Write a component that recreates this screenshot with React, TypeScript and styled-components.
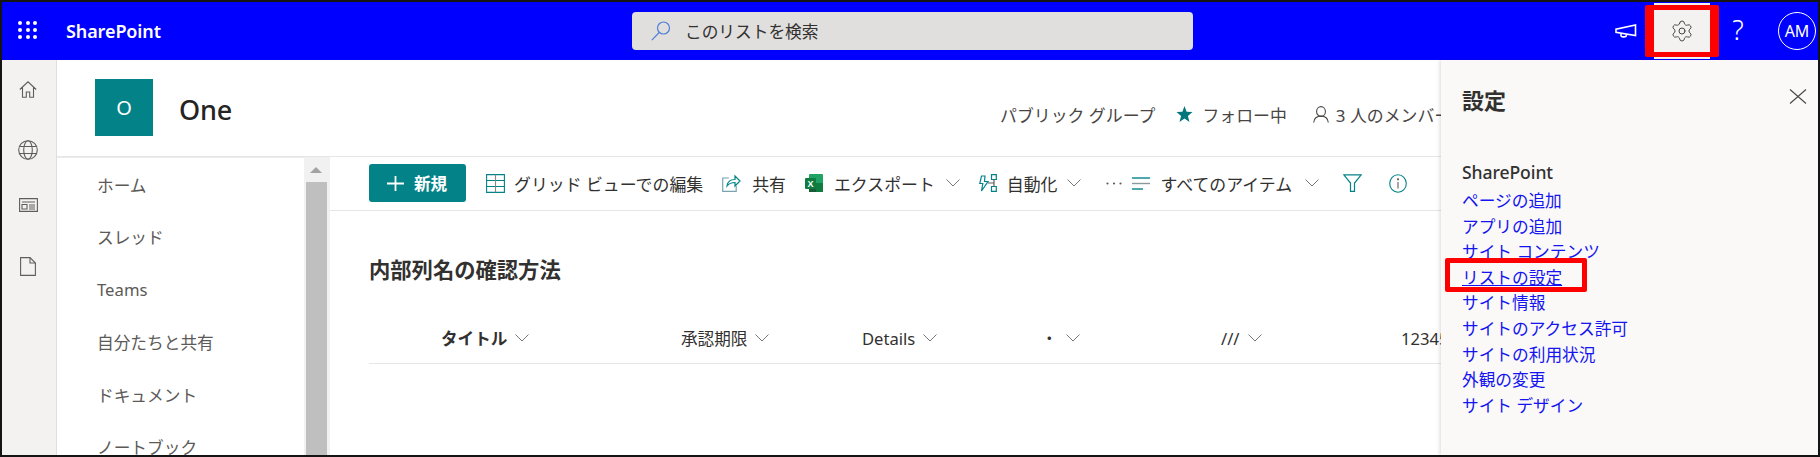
import { Settings } from "lucide-react";
import styled, { createGlobalStyle } from "styled-components";

const GlobalStyle = createGlobalStyle`
  html, body {
    margin: 0;
    padding: 0;
    background: #fff;
    font-family: "Noto Sans", "Noto Sans CJK JP", sans-serif;
  }
  * { box-sizing: border-box; }
`;

const Frame = styled.div`
  width: 1820px;
  height: 457px;
  border: 2px solid #141414;
  display: flex;
  flex-direction: column;
  overflow: hidden;
  color: #323130;
`;

const TopBar = styled.header`
  height: 58px;
  flex: none;
  background: #0000ff;
  display: flex;
  align-items: center;
  color: #fff;
`;

const Waffle = styled.div`
  width: 19px;
  height: 18px;
  margin-left: 16px;
  display: grid;
  grid-template-columns: repeat(3, 4px);
  grid-template-rows: repeat(3, 4px);
  justify-content: space-between;
  align-content: space-between;
  margin-top: -2px;
  span {
    background: #fff;
    border-radius: 50%;
  }
`;

const Brand = styled.div`
  margin-left: 29px;
  width: 566px;
  font-size: 18px;
  font-weight: 600;
  letter-spacing: -0.1px;
`;

const SearchBox = styled.div`
  width: 561px;
  height: 38px;
  background: #e0dfdd;
  border-radius: 4px;
  display: flex;
  align-items: center;
  padding-left: 19px;
  gap: 14px;
  color: #323130;
  font-size: 16.7px;
`;

const TopActions = styled.div`
  margin-left: auto;
  display: flex;
  align-items: center;
  height: 100%;
`;

const TopButton = styled.div<{ $active?: boolean }>`
  position: relative;
  width: 56px;
  height: 56px;
  display: flex;
  align-items: center;
  justify-content: center;
  background: ${(p) => (p.$active ? "#f3f2f1" : "transparent")};
  color: ${(p) => (p.$active ? "#484644" : "#fff")};
  font-size: 27px;
  font-weight: 300;
`;

const HelpMark = styled.span`
  margin-top: -4px;
`;

const Callout = styled.div<{ $v: number; $h: number }>`
  position: absolute;
  border-style: solid;
  border-color: #ff0000;
  border-width: ${(p) => p.$v}px ${(p) => p.$h}px;
  border-radius: 2px;
  pointer-events: none;
`;

const GearCallout = styled(Callout)`
  inset: 2px -9px;
`;

const LinkCallout = styled(Callout)`
  left: -17px;
  top: -7px;
  width: 142px;
  height: 34px;
`;

const Avatar = styled.div`
  width: 38px;
  height: 38px;
  margin: 0 2px 0 12px;
  border: 1px solid #fff;
  border-radius: 50%;
  display: flex;
  align-items: center;
  justify-content: center;
  font-size: 16px;
`;

const Body = styled.div`
  flex: 1;
  min-height: 0;
  display: flex;
`;

const Rail = styled.aside`
  width: 55px;
  flex: none;
  background: #f3f2f1;
  border-right: 1px solid #e1dfdd;
  display: flex;
  flex-direction: column;
  align-items: center;
  color: #605e5c;
  padding-top: 21px;
  padding-right: 2px;
`;

const RailSlot = styled.div`
  height: 58.5px;
  display: flex;
  align-items: flex-start;
  justify-content: center;
`;

const Main = styled.main`
  flex: 1;
  min-width: 0;
  display: flex;
  flex-direction: column;
  overflow: hidden;
`;

const SiteHeader = styled.div`
  height: 97px;
  flex: none;
  border-bottom: 1px solid #e8e6e4;
  display: flex;
  align-items: center;
  padding-left: 38px;
`;

const SiteLogo = styled.div`
  width: 58px;
  height: 57px;
  flex: none;
  margin-top: -1px;
  background: #038387;
  color: #fff;
  display: flex;
  align-items: center;
  justify-content: center;
  font-size: 20px;
`;

const SiteTitle = styled.div`
  flex: 0 0 821px;
  margin-left: 26px;
  padding-top: 2px;
  font-size: 27px;
  font-weight: 500;
  letter-spacing: -0.2px;
  color: #252423;
`;

const SiteMeta = styled.div`
  flex: none;
  display: flex;
  align-items: center;
  margin-top: 12px;
  font-size: 16.9px;
  white-space: nowrap;
  color: #484644;
`;

const MetaItem = styled.span<{ $ml: number }>`
  margin-left: ${(p) => p.$ml}px;
  display: inline-flex;
  align-items: center;
`;

const Workspace = styled.div`
  flex: 1;
  min-height: 0;
  display: flex;
`;

const Nav = styled.nav`
  width: 247px;
  flex: none;
  padding: 0.5px 0 0 40px;
  overflow: hidden;
  border-top: 1px solid #ececec;
`;

const NavItem = styled.div`
  height: 52.5px;
  display: flex;
  align-items: center;
  font-size: 16.7px;
  color: #5c5a58;
  white-space: nowrap;
`;

const ScrollTrack = styled.div`
  width: 26px;
  flex: none;
  background: #f1f1f1;
  display: flex;
  flex-direction: column;
  align-items: flex-end;
  padding-right: 3px;
`;

const ScrollArrow = styled.div`
  width: 23px;
  height: 25px;
  display: flex;
  align-items: center;
  justify-content: center;
  &::before {
    content: "";
    border-left: 6px solid transparent;
    border-right: 6px solid transparent;
    border-bottom: 6px solid #a3a3a3;
  }
`;

const ScrollThumb = styled.div`
  width: 21px;
  flex: 1;
  background: #bfbfbf;
`;

const Content = styled.section`
  flex: 1;
  min-width: 0;
  display: flex;
  flex-direction: column;
`;

const CommandBar = styled.div`
  height: 54px;
  flex: none;
  border-bottom: 1px solid #e8e6e4;
  display: flex;
  align-items: center;
  padding: 0 0 1px 39px;
  white-space: nowrap;
`;

const NewButton = styled.div`
  width: 97px;
  height: 38px;
  flex: none;
  background: #038387;
  border-radius: 3px;
  color: #fff;
  display: flex;
  align-items: center;
  padding-left: 18px;
  gap: 10px;
  font-size: 16.6px;
  font-weight: 700;
`;

const ToolItem = styled.div<{ $ml: number; $gap?: number }>`
  flex: none;
  margin-left: ${(p) => p.$ml}px;
  display: flex;
  align-items: center;
  gap: ${(p) => p.$gap ?? 10}px;
  font-size: 16.9px;
  color: #323130;
`;

const ListBody = styled.div`
  padding-left: 39px;
`;

const ListTitle = styled.h2`
  margin: 44px 0 28px;
  font-size: 21.3px;
  line-height: 30px;
  font-weight: 700;
  color: #323130;
`;

const ColumnRow = styled.div`
  height: 51px;
  border-bottom: 1px solid #e8e6e4;
  display: flex;
  align-items: center;
  padding-left: 72px;
  white-space: nowrap;
`;

const Column = styled.div<{ $width: number; $bold?: boolean }>`
  flex: 0 0 ${(p) => p.$width}px;
  display: flex;
  align-items: center;
  gap: 8px;
  font-size: 16.6px;
  font-weight: ${(p) => (p.$bold ? 600 : 400)};
  color: #323130;
`;

const Panel = styled.aside`
  width: 377px;
  flex: none;
  background: #faf9f8;
  box-shadow: -2px 0 3px rgba(0, 0, 0, 0.1);
  padding: 25px 11px 0 21px;
  position: relative;
`;

const PanelHead = styled.div`
  display: flex;
  align-items: flex-start;
  justify-content: space-between;
`;

const PanelClose = styled.span`
  display: flex;
  margin-top: 4px;
`;

const PanelTitle = styled.h2`
  margin: 0;
  font-size: 22px;
  line-height: 30px;
  font-weight: 700;
  color: #323130;
`;

const PanelGroup = styled.div`
  margin-top: 45px;
  font-size: 17.6px;
  line-height: 24px;
  font-weight: 500;
  letter-spacing: -0.1px;
  color: #323130;
`;

const PanelLinks = styled.div`
  margin-top: 4px;
  display: flex;
  flex-direction: column;
`;

const PanelLink = styled.a<{ $current?: boolean }>`
  position: relative;
  align-self: flex-start;
  height: 25.6px;
  line-height: 25.6px;
  font-size: 16.7px;
  color: #1414f0;
  text-decoration: ${(p) => (p.$current ? "underline" : "none")};
  white-space: nowrap;
`;

const SearchIcon = () => (
  <svg width="20" height="20" viewBox="0 0 20 20" fill="none" stroke="#4f7fd6" strokeWidth="1.2">
    <circle cx="12.5" cy="7" r="6" />
    <path d="M8.2 11.5 0.8 19.2" />
  </svg>
);

const Megaphone = () => (
  <svg width="22" height="14" viewBox="0 0 22 14" fill="none" stroke="#fff" strokeWidth="1.6">
    <path d="M20.5 1v10.500L1 8.300V5.200z" />
    <path d="M6 9.500v2.200c0 1.200 3.600 1.700 5 .6l.6-1.800" />
  </svg>
);

const Chevron = () => (
  <svg width="14" height="8" viewBox="0 0 14 8" fill="none" stroke="#7a7876" strokeWidth="1">
    <path d="M.5.5 7 7l6.500-6.500" />
  </svg>
);

const HomeIcon = () => (
  <svg width="18" height="17" viewBox="0 0 18 17" fill="none" stroke="#605e5c" strokeWidth="1.1">
    <path d="M.8 8.500 9 .8l8.200 7.700M3.500 6.500v9.800h3.800v-5.300h3.400v5.300h3.800V6.500" />
  </svg>
);

const GlobeIcon = () => (
  <svg width="20" height="20" viewBox="0 0 20 20" fill="none" stroke="#605e5c" strokeWidth="1.1">
    <circle cx="10" cy="10" r="9.300" />
    <ellipse cx="10" cy="10" rx="4.300" ry="9.300" />
    <path d="M1.500 6.500h17M1.500 13.500h17" />
  </svg>
);

const NewsIcon = () => (
  <svg width="19" height="14" viewBox="0 0 19 14" fill="none" stroke="#605e5c" strokeWidth="1.1">
    <path d="M.6.6h17.800v12.800H.6z" />
    <path d="M3 4h13M3 6.500h5v4.500H3zM10 7h6M10 9h6M10 11h6" />
  </svg>
);

const DocIcon = () => (
  <svg width="16" height="19" viewBox="0 0 16 19" fill="none" stroke="#605e5c" strokeWidth="1.1">
    <path d="M.6.6h9.400l5.400 5.400v12.400H.6z" />
    <path d="M10 .6v5.400h5.400" />
  </svg>
);

const PlusIcon = () => (
  <svg width="17" height="15" viewBox="0 0 17 15" fill="none" stroke="#fff" strokeWidth="1.8">
    <path d="M8.500 0v15M0 7.500h17" />
  </svg>
);

const GridIcon = () => (
  <svg width="19" height="19" viewBox="0 0 19 19" fill="none" stroke="#038387" strokeWidth="1.1">
    <path d="M.6.6h17.800v17.800H.6z" />
    <path d="M.6 6.500h17.800M.6 12.500h17.800" />
    <path d="M9.500.6v17.800" stroke="#8a8886" />
  </svg>
);

const ShareIcon = () => (
  <svg width="19" height="18" viewBox="0 0 19 18" fill="none" strokeWidth="1.2">
    <path d="M7 4H.7v13.300h13.500V12" stroke="#7aa3ab" />
    <path d="M5 12c.5-4 3.500-6.500 8-6.500V2l5 5-5 5V8.500c-3.500 0-6 1-8 3.500z" stroke="#038387" />
  </svg>
);

const ExcelIcon = () => (
  <svg width="18" height="18" viewBox="0 0 18 18">
    <rect x="4" y="0" width="14" height="18" rx="1" fill="#21a366" />
    <rect x="11" y="9" width="7" height="9" fill="#107c41" />
    <rect x="4" y="9" width="7" height="9" fill="#185c37" />
    <rect x="0" y="4" width="11" height="11" rx="1" fill="#107c41" />
    <text x="5.500" y="12.700" textAnchor="middle" fontSize="9" fontWeight="700" fill="#fff" fontFamily="Liberation Sans, sans-serif">
      X
    </text>
  </svg>
);

const AutomateIcon = () => (
  <svg width="18" height="18" viewBox="0 0 18 18" fill="none" stroke="#038387" strokeWidth="1.2">
    <path d="M6 2H2.500L.8 9.500h3L2.500 17 9 7.500H5.500z" />
    <path d="M12.500.7h4.800v4.800h-4.800zM12.500 12.500h4.800v4.800h-4.800z" />
    <path d="M15 5.500v7M9 9h6" stroke="#605e5c" />
  </svg>
);

const DotsIcon = () => (
  <svg width="16" height="3" viewBox="0 0 16 3" fill="#605e5c">
    <circle cx="1.500" cy="1.500" r="1.100" />
    <circle cx="8" cy="1.500" r="1.100" />
    <circle cx="14.500" cy="1.500" r="1.100" />
  </svg>
);

const LinesIcon = () => (
  <svg width="18" height="13" viewBox="0 0 18 13" fill="none" strokeWidth="1.4">
    <path d="M0 1h18" stroke="#038387" />
    <path d="M0 6.500h18" stroke="#8a9a9a" />
    <path d="M0 12h11" stroke="#038387" />
  </svg>
);

const FunnelIcon = () => (
  <svg width="19" height="18" viewBox="0 0 19 18" fill="none" stroke="#038387" strokeWidth="1.2">
    <path d="M.8.8h17.400L11.500 9v8.300h-4V9z" />
  </svg>
);

const InfoIcon = () => (
  <svg width="18" height="19" viewBox="0 0 18 19" fill="none" stroke="#038387" strokeWidth="1.1">
    <ellipse cx="9" cy="9.500" rx="8.300" ry="8.800" />
    <path d="M9 8v6.500" stroke="#605e5c" />
    <circle cx="9" cy="5.300" r=".6" fill="#605e5c" stroke="#605e5c" />
  </svg>
);

const StarIcon = () => (
  <svg width="17" height="16" viewBox="0 0 17 16" fill="#03787c">
    <path d="M8.500 0l2.100 5.800 5.900.3-4.600 3.800 1.600 6.100-5-3.400-5 3.400 1.600-6.100L.5 6.100l5.900-.3z" />
  </svg>
);

const PersonIcon = () => (
  <svg width="16" height="17" viewBox="0 0 16 17" fill="none" stroke="#484644" strokeWidth="1.1">
    <ellipse cx="8" cy="5.500" rx="4.400" ry="4.900" />
    <path d="M.7 16.500c.4-4 3.300-6.400 7.300-6.400s6.900 2.400 7.300 6.400" />
  </svg>
);

const CloseIcon = () => (
  <svg width="18" height="15" viewBox="0 0 18 15" fill="none" stroke="#484644" strokeWidth="1.1">
    <path d="M1 .5 17 14.500M17 .5 1 14.500" />
  </svg>
);

const navItems = ["ホーム", "スレッド", "Teams", "自分たちと共有", "ドキュメント", "ノートブック"];

const links = [
  "ページの追加",
  "アプリの追加",
  "サイト コンテンツ",
  "リストの設定",
  "サイト情報",
  "サイトのアクセス許可",
  "サイトの利用状況",
  "外観の変更",
  "サイト デザイン",
];

const columns = [
  { label: "タイトル", width: 240, bold: true },
  { label: "承認期限", width: 181 },
  { label: "Details", width: 179 },
  { label: "・", width: 180 },
  { label: "///", width: 180 },
];

function App() {
  return (
    <Frame>
      <GlobalStyle />
      <TopBar>
        <Waffle>
          {Array.from({ length: 9 }, (_, i) => (
            <span key={i} />
          ))}
        </Waffle>
        <Brand>SharePoint</Brand>
        <SearchBox>
          <SearchIcon />
          このリストを検索
        </SearchBox>
        <TopActions>
          <TopButton>
            <Megaphone />
          </TopButton>
          <TopButton $active>
            <Settings size={24} strokeWidth={1} />
            <GearCallout $v={5} $h={9} />
          </TopButton>
          <TopButton>
            <HelpMark>?</HelpMark>
          </TopButton>
          <Avatar>AM</Avatar>
        </TopActions>
      </TopBar>
      <Body>
        <Rail>
          <RailSlot>
            <HomeIcon />
          </RailSlot>
          <RailSlot>
            <GlobeIcon />
          </RailSlot>
          <RailSlot>
            <NewsIcon />
          </RailSlot>
          <RailSlot>
            <DocIcon />
          </RailSlot>
        </Rail>
        <Main>
          <SiteHeader>
            <SiteLogo>O</SiteLogo>
            <SiteTitle>One</SiteTitle>
            <SiteMeta>
              パブリック グループ
              <MetaItem $ml={21}>
                <StarIcon />
              </MetaItem>
              <MetaItem $ml={9}>フォロー中</MetaItem>
              <MetaItem $ml={26}>
                <PersonIcon />
              </MetaItem>
              <MetaItem $ml={7}>3 人のメンバー</MetaItem>
            </SiteMeta>
          </SiteHeader>
          <Workspace>
            <Nav>
              {navItems.map((item) => (
                <NavItem key={item}>{item}</NavItem>
              ))}
            </Nav>
            <ScrollTrack>
              <ScrollArrow />
              <ScrollThumb />
            </ScrollTrack>
            <Content>
              <CommandBar>
                <NewButton>
                  <PlusIcon />
                  新規
                </NewButton>
                <ToolItem $ml={20} $gap={9}>
                  <GridIcon />
                  グリッド ビューでの編集
                </ToolItem>
                <ToolItem $ml={19} $gap={11}>
                  <ShareIcon />
                  共有
                </ToolItem>
                <ToolItem $ml={19} $gap={11}>
                  <ExcelIcon />
                  エクスポート
                  <Chevron />
                </ToolItem>
                <ToolItem $ml={19} $gap={10}>
                  <AutomateIcon />
                  自動化
                  <Chevron />
                </ToolItem>
                <ToolItem $ml={25}>
                  <DotsIcon />
                  <LinesIcon />
                </ToolItem>
                <ToolItem $ml={10} $gap={13}>
                  すべてのアイテム
                  <Chevron />
                </ToolItem>
                <ToolItem $ml={24}>
                  <FunnelIcon />
                </ToolItem>
                <ToolItem $ml={27}>
                  <InfoIcon />
                </ToolItem>
              </CommandBar>
              <ListBody>
                <ListTitle>内部列名の確認方法</ListTitle>
                <ColumnRow>
                  {columns.map((col) => (
                    <Column key={col.label} $width={col.width} $bold={col.bold}>
                      {col.label}
                      <Chevron />
                    </Column>
                  ))}
                  <Column $width={100}>12345</Column>
                </ColumnRow>
              </ListBody>
            </Content>
          </Workspace>
        </Main>
        <Panel>
          <PanelHead>
            <PanelTitle>設定</PanelTitle>
            <PanelClose>
              <CloseIcon />
            </PanelClose>
          </PanelHead>
          <PanelGroup>SharePoint</PanelGroup>
          <PanelLinks>
            {links.map((link) => (
              <PanelLink key={link} $current={link === "リストの設定"}>
                {link}
                {link === "リストの設定" && <LinkCallout $v={5} $h={5} />}
              </PanelLink>
            ))}
          </PanelLinks>
        </Panel>
      </Body>
    </Frame>
  );
}

export default App;
